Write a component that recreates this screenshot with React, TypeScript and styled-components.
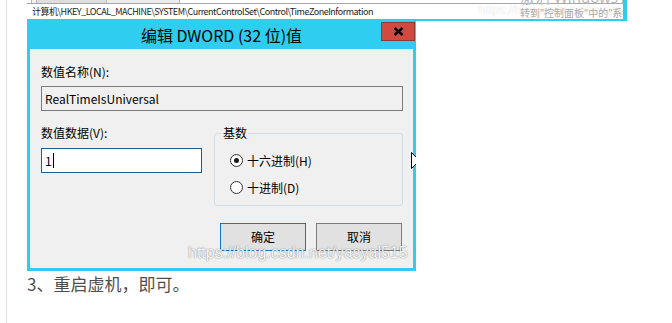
import React from "react";
import styled, { createGlobalStyle } from "styled-components";

const CYAN = "#2fcdef";
const UI_FONT = `"Noto Sans CJK SC", "Noto Sans", sans-serif`;

const GlobalStyle = createGlobalStyle`
  html, body { margin: 0; padding: 0; background: #ffffff; }
  body { font-family: ${UI_FONT}; }
  * { box-sizing: border-box; }
`;

const Page = styled.div`
  width: 672px;
  height: 323px;
  overflow: hidden;
  padding-left: 6px;
`;

const Article = styled.div`
  height: 100%;
  border-left: 1px solid #e2e2e2;
  padding-left: 20px;
`;

const Figure = styled.div`
  width: 600px;
`;

/* ---------- background regedit strip ---------- */
const RegStrip = styled.div`
  position: relative;
  width: 600px;
  height: 21px;
  background: #ffffff;
  border-right: 4px solid ${CYAN};
  border-bottom: 2px solid ${CYAN};
  overflow: hidden;
`;

const ScrollRow = styled.div`
  display: flex;
  height: 4px;
  border-bottom: 1px solid #a7a7a7;
`;

const ScrollCell = styled.div<{ $w: number; $bg: string }>`
  width: ${(p) => p.$w}px;
  background: ${(p) => p.$bg};
  border-right: 1px solid #b8b8b8;
`;

const StatusBar = styled.div`
  height: 15px;
  padding-left: 5px;
  font-size: 9px;
  line-height: 15px;
  color: #1a1a1a;
  white-space: nowrap;
  letter-spacing: -0.48px;
`;

const ActivateTitle = styled.div`
  position: absolute;
  left: 493px;
  top: -11px;
  font-family: "Noto Sans", "Noto Sans CJK SC", sans-serif;
  font-size: 15px;
  line-height: 16px;
  color: #b9b9b9;
  white-space: nowrap;
`;

const ActivateHint = styled.div`
  position: absolute;
  left: 493px;
  top: 7px;
  font-family: "Noto Sans", "Noto Sans CJK SC", sans-serif;
  font-size: 10px;
  line-height: 13px;
  color: #a9a9a9;
  white-space: nowrap;
`;

const FaintMark = styled.div`
  position: absolute;
  left: 452px;
  top: 3px;
  font-family: "Liberation Sans", Arial, sans-serif;
  font-size: 12px;
  line-height: 14px;
  color: rgba(255, 255, 255, 0.9);
  text-shadow: 0 0 1px rgba(0, 0, 0, 0.16);
  white-space: nowrap;
`;

/* ---------- dialog ---------- */
const Dialog = styled.div`
  position: relative;
  width: 389px;
  background: ${CYAN};
  border-left: 3px solid ${CYAN};
  border-right: 3px solid ${CYAN};
  border-bottom: 3px solid ${CYAN};
`;

const TitleBar = styled.div`
  position: relative;
  height: 28px;
  text-align: center;
  font-size: 16px;
  line-height: 28px;
  color: #000;
`;

const CloseButton = styled.div`
  position: absolute;
  right: -2px;
  top: 1px;
  width: 34px;
  height: 19px;
  background: #d2493f;
  border: 1px solid #8d3a34;
  display: flex;
  align-items: center;
  justify-content: center;
`;

const Panel = styled.div`
  height: 219px;
  background: #f0f0f0;
  padding: 15px 10px 0 11px;
  font-size: 12px;
  color: #000;
`;

const Label = styled.div`
  height: 16px;
  line-height: 16px;
  font-size: 12px;
  white-space: nowrap;
`;

const TextBox = styled.div<{ $focused?: boolean }>`
  height: 25px;
  margin-top: ${(p) => (p.$focused ? 7 : 6)}px;
  padding-left: 3px;
  border: 1px solid ${(p) => (p.$focused ? "#1d5f8f" : "#7a7a7a")};
  background: ${(p) => (p.$focused ? "#ffffff" : "#f0f0f0")};
  line-height: 23px;
  font-size: 12px;
  display: flex;
  align-items: center;
`;

const Caret = styled.span`
  display: inline-block;
  width: 1px;
  height: 15px;
  margin-left: 1px;
  background: #000;
`;

const DataRow = styled.div`
  margin-top: 14px;
  display: grid;
  grid-template-columns: 161px 189px;
  column-gap: 12px;
  align-items: start;
`;

const BaseGroup = styled.fieldset`
  margin: 0;
  padding: 0 0 8px 7px;
  border: 1px solid #d6dde3;
  border-radius: 3px;
  min-width: 0;
`;

const Legend = styled.legend`
  padding: 0 1px;
  font-size: 12px;
  line-height: 16px;
`;

const RadioRow = styled.div<{ $first?: boolean }>`
  height: 20px;
  margin-top: ${(p) => (p.$first ? 9 : 7)}px;
  margin-left: 8px;
  display: flex;
  align-items: center;
  gap: 4px;
  font-size: 12px;
`;

const RadioDot = styled.span<{ $checked?: boolean }>`
  width: 13px;
  height: 13px;
  border-radius: 50%;
  border: 1px solid #333333;
  background: #ffffff;
  display: flex;
  align-items: center;
  justify-content: center;
  &::after {
    content: "";
    width: 5px;
    height: 5px;
    border-radius: 50%;
    background: ${(p) => (p.$checked ? "#1a1a1a" : "transparent")};
  }
`;

const ButtonRow = styled.div`
  margin-top: 17px;
  padding-right: 1px;
  display: flex;
  justify-content: flex-end;
  gap: 10px;
`;

const Button = styled.div<{ $default?: boolean }>`
  width: 86px;
  height: 28px;
  background: #e1e1e1;
  border: 1px solid ${(p) => (p.$default ? "#1079c4" : "#7c7c7c")};
  font-size: 12px;
  line-height: 26px;
  text-align: center;
`;

const Watermark = styled.div`
  position: absolute;
  left: 158px;
  top: 222px;
  font-family: "Liberation Sans", Arial, sans-serif;
  font-size: 16px;
  line-height: 19px;
  color: rgba(255, 255, 255, 0.95);
  text-shadow: 0 0 1px rgba(0, 0, 0, 0.45), 0 0 2px rgba(0, 0, 0, 0.2);
  white-space: nowrap;
  pointer-events: none;
`;

const Cursor = styled.svg`
  position: absolute;
  left: 381px;
  top: 131px;
`;

const StepText = styled.p`
  margin: 1px 0 0;
  font-family: "Noto Sans CJK SC", sans-serif;
  font-size: 17px;
  line-height: 24px;
  color: #4f4f4f;
`;

export default function App() {
  return (
    <>
      <GlobalStyle />
      <Page>
        <Article>
          <Figure>
            <RegStrip>
              <ScrollRow>
                <ScrollCell $w={5} $bg="#ffffff" />
                <ScrollCell $w={5} $bg="#f2f2f2" />
                <ScrollCell $w={70} $bg="#dedede" />
                <ScrollCell $w={73} $bg="#ececec" />
                <ScrollCell $w={443} $bg="#ffffff" />
              </ScrollRow>
              <StatusBar>
                计算机\HKEY_LOCAL_MACHINE\SYSTEM\CurrentControlSet\Control\TimeZoneInformation
              </StatusBar>
              <FaintMark>https://blog.csdn.net/yasyal515</FaintMark>
              <ActivateTitle>激活 Windows</ActivateTitle>
              <ActivateHint>转到"控制面板"中的"系统"以激活 Windows。</ActivateHint>
            </RegStrip>
            <Dialog>
              <TitleBar>
                编辑 DWORD (32 位)值
                <CloseButton>
                  <svg width="11" height="9" viewBox="0 0 11 9">
                    <path d="M1.5 1 L9.5 8 M9.5 1 L1.5 8" stroke="#000" strokeWidth="2.4" />
                  </svg>
                </CloseButton>
              </TitleBar>
              <Panel>
                <Label>数值名称(N):</Label>
                <TextBox>RealTimeIsUniversal</TextBox>
                <DataRow>
                  <div>
                    <Label>数值数据(V):</Label>
                    <TextBox $focused>
                      1<Caret />
                    </TextBox>
                  </div>
                  <BaseGroup>
                    <Legend>基数</Legend>
                    <RadioRow $first>
                      <RadioDot $checked />
                      十六进制(H)
                    </RadioRow>
                    <RadioRow>
                      <RadioDot />
                      十进制(D)
                    </RadioRow>
                  </BaseGroup>
                </DataRow>
                <ButtonRow>
                  <Button $default>确定</Button>
                  <Button>取消</Button>
                </ButtonRow>
              </Panel>
              <Watermark>https://blog.csdn.net/yasyal515</Watermark>
              <Cursor width="5" height="17" viewBox="0 0 5 17">
                <path d="M0.5 0.5 L7.5 7.5 L7.5 9.5 L0.5 16.5 Z" fill="#fff" stroke="#000" strokeWidth="1" />
              </Cursor>
            </Dialog>
          </Figure>
          <StepText>3、重启虚机，即可。</StepText>
        </Article>
      </Page>
    </>
  );
}
